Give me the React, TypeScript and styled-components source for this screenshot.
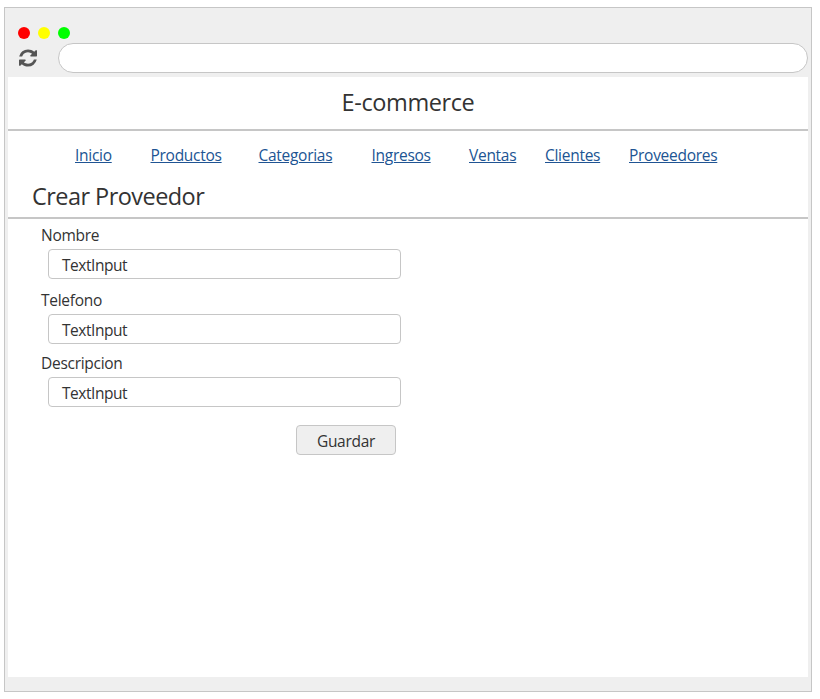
import React from "react";
import styled, { createGlobalStyle } from "styled-components";

const GlobalStyle = createGlobalStyle`
  *, *::before, *::after { box-sizing: border-box; }
  body {
    margin: 0;
    background: #fff;
    color: #333;
    font: 15.5px/20px "Open Sans", "Noto Sans", sans-serif;
    font-weight: 400;
    letter-spacing: -0.28px;
  }
`;

const BrowserWindow = styled.div`
  display: flex;
  flex-direction: column;
  width: 808px;
  height: 685px;
  margin: 7px 0 0 4px;
  padding: 19px 3px 14px;
  background: #efefef;
  border: 1px solid #c6c6c6;
`;

const WindowControls = styled.div`
  display: flex;
  gap: 8px;
  height: 12px;
  padding-left: 10px;
`;

const Light = styled.span<{ $color: string }>`
  width: 12px;
  height: 12px;
  border-radius: 50%;
  background: ${({ $color }) => $color};
`;

const AddressRow = styled.div`
  display: flex;
  align-items: center;
  height: 30px;
  margin: 4px 0;
  padding-left: 11px;
`;

const RefreshIcon = styled.svg`
  display: block;
  width: 18px;
  height: 20px;
  margin-right: 21px;
  fill: #555;
`;

const AddressBar = styled.div`
  flex: 1;
  height: 30px;
  border: 1px solid #c6c6c6;
  border-radius: 15px;
  background: #fff;
`;

const Page = styled.main`
  flex: 1;
  display: flex;
  flex-direction: column;
  background: #fff;
`;

const Header = styled.header`
  height: 54px;
  border-bottom: 2px solid #c6c6c6;
`;

const SiteTitle = styled.h1`
  margin: 0;
  font-size: 23.5px;
  font-weight: 400;
  line-height: 51px;
  letter-spacing: -0.4px;
  text-align: center;
`;

const Nav = styled.nav`
  display: grid;
  grid-template-columns: 75.5px 108px 113px 97.5px 76px 84px auto;
  height: 46px;
  padding-left: 67px;
  line-height: 48px;
`;

const NavLink = styled.a`
  justify-self: start;
  color: #205493;
  text-decoration: underline;
  text-decoration-thickness: 1px;
  text-underline-offset: 1px;
`;

const SectionTitle = styled.h2`
  height: 42px;
  margin: 0;
  padding-left: 24px;
  border-bottom: 2px solid #c6c6c6;
  font-size: 23.5px;
  font-weight: 400;
  line-height: 39px;
  letter-spacing: -0.55px;
`;

const Form = styled.form`
  display: flex;
  flex-direction: column;
  width: 393px;
  padding-top: 5px;
`;

const Field = styled.label<{ $gap: number }>`
  display: flex;
  flex-direction: column;
  gap: 3px;
  margin-bottom: ${({ $gap }) => $gap}px;
  padding-left: 33px;
  line-height: 22px;
`;

const FieldBox = styled.span`
  height: 30px;
  margin-left: 7px;
  padding-left: 13px;
  border: 1px solid #c6c6c6;
  border-radius: 4px;
  line-height: 30px;
  letter-spacing: -0.45px;
`;

const SaveButton = styled.button`
  align-self: flex-end;
  width: 100px;
  height: 30px;
  margin-right: 5px;
  padding: 1px 0 0;
  border: 1px solid #c6c6c6;
  border-radius: 4px;
  background: #efefef;
  color: inherit;
  font: inherit;
  letter-spacing: inherit;
`;

const lights = ["#f00", "#ff0", "#0f0"];
const links = ["Inicio", "Productos", "Categorias", "Ingresos", "Ventas", "Clientes", "Proveedores"];
const fields = [
  { label: "Nombre", gap: 10 },
  { label: "Telefono", gap: 8 },
  { label: "Descripcion", gap: 18 },
];

export default function App() {
  return (
    <>
      <GlobalStyle />
      <BrowserWindow>
        <WindowControls>
          {lights.map((color) => (
            <Light key={color} $color={color} />
          ))}
        </WindowControls>
        <AddressRow>
          <RefreshIcon viewBox="0 0 1536 1792" preserveAspectRatio="none" aria-hidden="true">
            <path d="M1511 1056q0 5-1 7-64 268-268 434.500t-478 166.500q-146 0-282.500-55t-243.500-157l-129 129q-19 19-45 19t-45-19-19-45v-448q0-26 19-45t45-19h448q26 0 45 19t19 45-19 45l-137 137q71 66 161 102t187 36q134 0 250-65t186-179q11-17 53-117 8-23 30-23h192q13 0 22.500 9.500t9.500 22.500zm25-800v448q0 26-19 45t-45 19h-448q-26 0-45-19t-19-45 19-45l138-138q-148-137-349-137-134 0-250 65t-186 179q-11 17-53 117-8 23-30 23h-199q-13 0-22.500-9.500t-9.500-22.500v-7q65-268 270-434.500t480-166.500q146 0 284 55.500t245 156.500l130-129q19-19 45-19t45 19 19 45z" />
          </RefreshIcon>
          <AddressBar />
        </AddressRow>
        <Page>
          <Header>
            <SiteTitle>E-commerce</SiteTitle>
          </Header>
          <Nav>
            {links.map((link) => (
              <NavLink key={link} href="#">
                {link}
              </NavLink>
            ))}
          </Nav>
          <SectionTitle>Crear Proveedor</SectionTitle>
          <Form>
            {fields.map(({ label, gap }) => (
              <Field key={label} $gap={gap}>
                {label}
                <FieldBox>TextInput</FieldBox>
              </Field>
            ))}
            <SaveButton type="button">Guardar</SaveButton>
          </Form>
        </Page>
      </BrowserWindow>
    </>
  );
}
